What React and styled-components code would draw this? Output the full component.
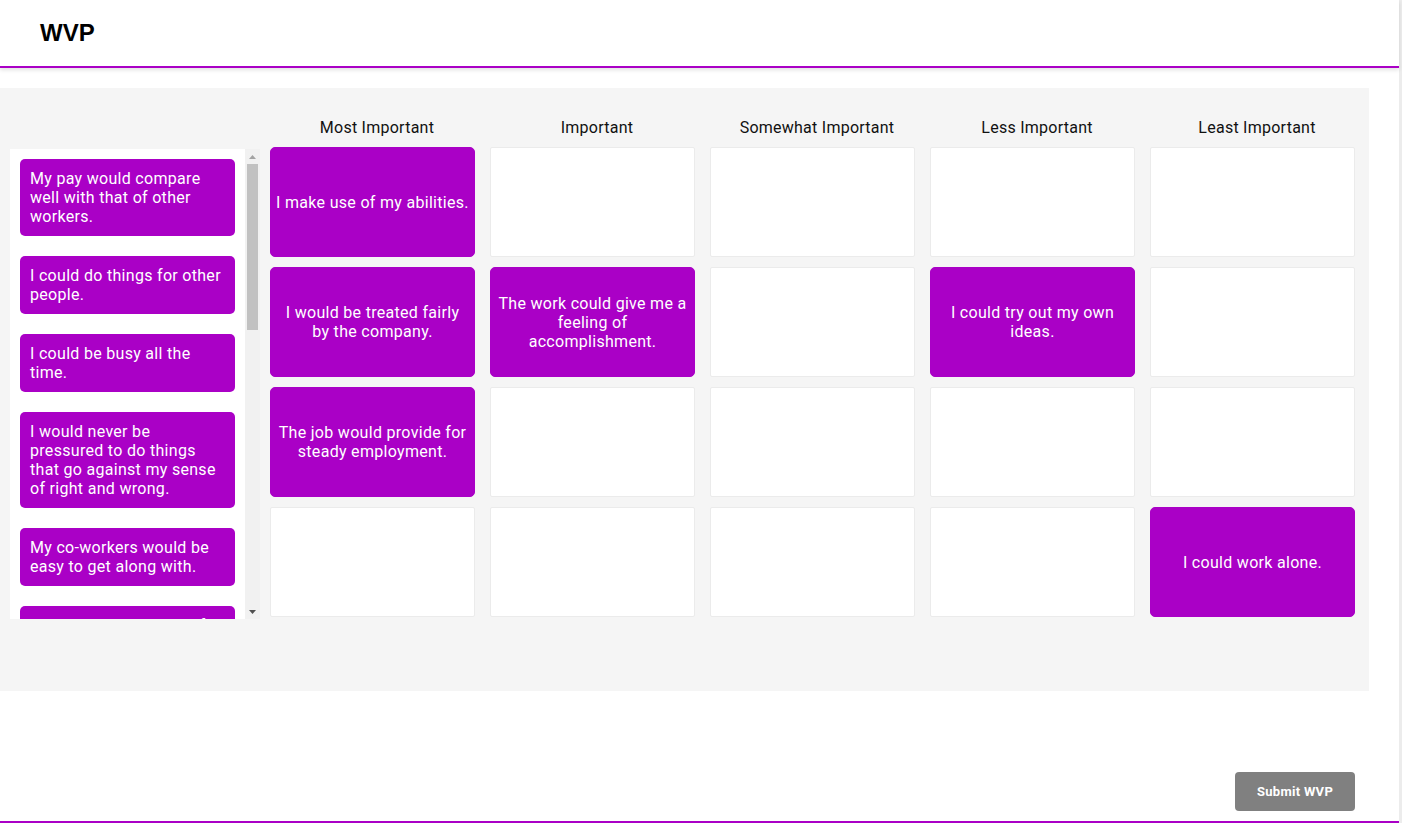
import React from "react";
import styled, { createGlobalStyle } from "styled-components";

const PURPLE = "#aa00c6";

const GlobalStyle = createGlobalStyle`
  html, body { margin: 0; padding: 0; background: #fff; }
  body { font-family: Roboto, "Liberation Sans", Arial, sans-serif; color: #000; }
  * { box-sizing: border-box; }
`;

const Page = styled.div`
  width: 1402px;
  min-height: 823px;
  display: flex;
  flex-direction: column;
  border-right: 3px solid #ececec;
  background: #fff;
`;

const Header = styled.header`
  height: 68px;
  display: flex;
  align-items: center;
  padding-left: 40px;
  border-bottom: 2px solid ${PURPLE};
  box-shadow: 0 2px 4px rgba(0, 0, 0, 0.12);
  position: relative;
  z-index: 1;
`;

const Title = styled.h1`
  margin: 0;
  font-family: "Liberation Sans", Arial, sans-serif;
  font-weight: 700;
  font-size: 24px;
  letter-spacing: 0.1px;
  color: #000;
`;

const Board = styled.section`
  margin-top: 20px;
  width: 1369px;
  height: 603px;
  background: #f5f5f5;
  display: flex;
  align-items: flex-start;
  padding: 0 14px 0 10px;
`;

const Pool = styled.div`
  width: 250px;
  height: 470px;
  margin-top: 61px;
  margin-right: 10px;
  background: #fff;
  display: flex;
`;

const PoolList = styled.div`
  flex: 1;
  overflow: hidden;
  padding: 10px;
  display: flex;
  flex-direction: column;
  gap: 20px;
`;

const ScrollBar = styled.div`
  width: 15px;
  flex: none;
  background: #f1f1f1;
  display: flex;
  flex-direction: column;
`;

const ScrollArrow = styled.div`
  height: 15px;
  flex: none;
  display: flex;
  align-items: center;
  justify-content: center;
`;

const ScrollTrack = styled.div`
  flex: 1;
  padding: 0 2px;
`;

const ScrollThumb = styled.div`
  height: 166px;
  background: #c1c1c1;
`;

const PoolCard = styled.div`
  flex: none;
  background: ${PURPLE};
  color: #fff;
  border-radius: 5px;
  padding: 10px;
  font-size: 16px;
  line-height: 19px;
  letter-spacing: 0.3px;
`;

const Grid = styled.div`
  display: grid;
  grid-template-columns: repeat(5, 205px);
  grid-template-rows: 49px repeat(4, 110px);
  column-gap: 15px;
  row-gap: 10px;
`;

const ColHead = styled.div`
  display: flex;
  align-items: flex-end;
  justify-content: center;
  padding-left: 9px;
  font-size: 16px;
  line-height: 19px;
  letter-spacing: 0.25px;
  color: #111;
`;

const Cell = styled.div`
  display: flex;
  align-items: center;
  justify-content: center;
  text-align: center;
  padding: 5px 4.75px;
  font-size: 16px;
  line-height: 19px;
  letter-spacing: 0.3px;
  background: ${(p) => (p.$filled ? PURPLE : "#fff")};
  color: #fff;
  border: 1px solid ${(p) => (p.$filled ? PURPLE : "#ebebeb")};
  border-radius: ${(p) => (p.$filled ? "5px" : "2px")};
`;

const Footer = styled.footer`
  flex: 1;
  display: flex;
  justify-content: flex-end;
  align-items: flex-end;
  padding: 0 44px 10px 0;
  border-bottom: 2px solid ${PURPLE};
`;

const SubmitButton = styled.button`
  width: 120px;
  height: 39px;
  border: none;
  border-radius: 4px;
  background: #808080;
  color: #fff;
  font-family: Roboto, "Liberation Sans", Arial, sans-serif;
  font-weight: 700;
  font-size: 13px;
  letter-spacing: 0.3px;
  cursor: pointer;
`;

const columns = [
  "Most Important",
  "Important",
  "Somewhat Important",
  "Less Important",
  "Least Important",
];

const rows = [
  ["I make use of my abilities.", "", "", "", ""],
  [
    "I would be treated fairly by the company.",
    "The work could give me a feeling of accomplishment.",
    "",
    "I could try out my own ideas.",
    "",
  ],
  ["The job would provide for steady employment.", "", "", "", ""],
  ["", "", "", "", "I could work alone."],
];

const pool = [
  "My pay would compare well with that of other workers.",
  "I could do things for other people.",
  "I could be busy all the time.",
  "I would never be pressured to do things that go against my sense of right and wrong.",
  "My co-workers would be easy to get along with.",
  "I could get recognition for the work I do.",
  "I could tell people what to do.",
  "The job would provide an opportunity for advancement.",
  "The job would have good working conditions.",
  "I could make decisions on my own.",
  "I could do something different every day.",
  "I would have supervisors who would back up their workers with management.",
  "I would have supervisors who train their workers well.",
  "I could plan my work with little supervision.",
];

const Arrow = ({ up, color }) => (
  <svg width="7" height="4" viewBox="0 0 7 4">
    <polygon points={up ? "0,4 7,4 3.5,0" : "0,0 7,0 3.5,4"} fill={color} />
  </svg>
);

export default function App() {
  return (
    <>
      <GlobalStyle />
      <Page>
        <Header>
          <Title>WVP</Title>
        </Header>
        <Board>
          <Pool>
            <PoolList>
              {pool.map((t) => (
                <PoolCard key={t}>{t}</PoolCard>
              ))}
            </PoolList>
            <ScrollBar>
              <ScrollArrow>
                <Arrow up color="#a3a3a3" />
              </ScrollArrow>
              <ScrollTrack>
                <ScrollThumb />
              </ScrollTrack>
              <ScrollArrow>
                <Arrow color="#505050" />
              </ScrollArrow>
            </ScrollBar>
          </Pool>
          <Grid>
            {columns.map((c) => (
              <ColHead key={c}>{c}</ColHead>
            ))}
            {rows.map((r, ri) =>
              r.map((t, ci) => (
                <Cell key={`${ri}-${ci}`} $filled={!!t}>
                  {t}
                </Cell>
              ))
            )}
          </Grid>
        </Board>
        <Footer>
          <SubmitButton>Submit WVP</SubmitButton>
        </Footer>
      </Page>
    </>
  );
}
